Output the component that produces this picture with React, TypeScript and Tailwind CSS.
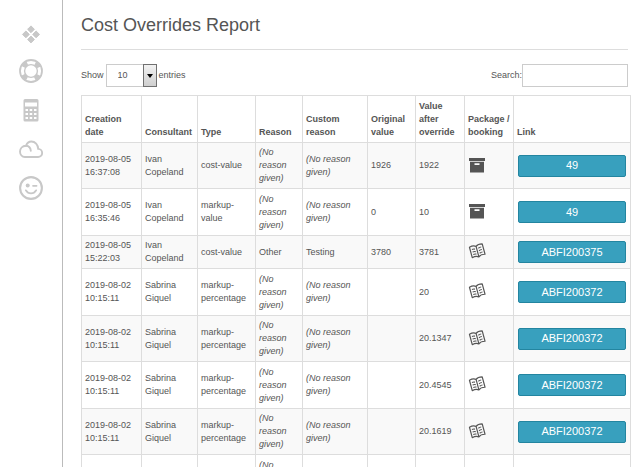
import React from "react";

type Row = {
  date: string;
  time: string;
  consultant: string;
  type: string;
  reason?: string;
  custom?: string;
  original: string;
  value: string;
  kind: "package" | "booking";
  link: string;
};

const sabrina = (value: string): Row => ({
  date: "2019-08-02",
  time: "10:15:11",
  consultant: "Sabrina Giquel",
  type: "markup-percentage",
  original: "",
  value,
  kind: "booking",
  link: "ABFI200372",
});

const rows: Row[] = [
  { date: "2019-08-05", time: "16:37:08", consultant: "Ivan Copeland", type: "cost-value", original: "1926", value: "1922", kind: "package", link: "49" },
  { date: "2019-08-05", time: "16:35:46", consultant: "Ivan Copeland", type: "markup-value", original: "0", value: "10", kind: "package", link: "49" },
  { date: "2019-08-05", time: "15:22:03", consultant: "Ivan Copeland", type: "cost-value", reason: "Other", custom: "Testing", original: "3780", value: "3781", kind: "booking", link: "ABFI200375" },
  sabrina("20"),
  sabrina("20.1347"),
  sabrina("20.4545"),
  sabrina("20.1619"),
  sabrina("20.1619"),
];

const headings = ["Creation date", "Consultant", "Type", "Reason", "Custom reason", "Original value", "Value after override", "Package\u00a0/ booking", "Link"];

function Diamonds() {
  return (
    <svg viewBox="0 0 24 24" className="block size-6" fill="currentColor" stroke="currentColor" strokeWidth="1" strokeLinejoin="round">
      <path d="M12 5.900l3.400 3.400-3.400 3.400-3.400-3.400zM12 16.100l3.400 3.400-3.400 3.400-3.400-3.400zM6.900 11l3.400 3.400-3.400 3.400-3.400-3.400zM17.100 11l3.400 3.400-3.400 3.400-3.400-3.400z" />
    </svg>
  );
}

function LifeRing() {
  return (
    <svg viewBox="0 0 24 24" className="block size-6" fill="none" stroke="currentColor">
      <circle cx="12" cy="12" r="11" strokeWidth="1.8" />
      <circle cx="12" cy="12" r="6.4" strokeWidth="1.4" />
      <circle cx="12" cy="12" r="8.6" strokeWidth="4.4" strokeDasharray="5.4 8.11" strokeDashoffset="-4.055" />
    </svg>
  );
}

function Calculator() {
  return (
    <svg viewBox="0 0 24 24" className="block size-6" fill="currentColor">
      <path fillRule="evenodd" d="M6 1h12a1.5 1.5 0 0 1 1.5 1.5v19.500a1.500 1.500 0 0 1-1.500 1.500H6a1.500 1.500 0 0 1-1.500-1.500V2.500A1.500 1.500 0 0 1 6 1zM6 4.500v4h12v-4zM6.500 11v2h2.500v-2zM10.700 11v2h2.500v-2zM15 11v2h2.500v-2zM6.500 15v2h2.500v-2zM10.700 15v2h2.500v-2zM15 15v2h2.500v-2zM6.500 19v2h2.500v-2zM10.700 19v2h2.500v-2zM15 19v2h2.500v-2z" />
    </svg>
  );
}

function Cloud() {
  return (
    <svg viewBox="0 0 24 24" className="block size-6" fill="none" stroke="currentColor" strokeWidth="1.900" strokeLinecap="round">
      <path d="M5.800 20h13.200a4 4 0 0 0 .2-8.100C19 7.800 16.200 4.500 12.300 4.500 9.700 4.500 7.900 6.200 7 8.700 3.300 8.900 1 11.500 1 14.600c0 3.100 2.200 5.400 4.800 5.400z" />
      <path d="M7 8.700c2.700.2 4.600 2 4.800 5" />
    </svg>
  );
}

function Wink() {
  return (
    <svg viewBox="0 0 24 24" className="block size-6" fill="none" stroke="currentColor" strokeWidth="1.700" strokeLinecap="round">
      <circle cx="12" cy="12" r="10.900" strokeWidth="2.100" />
      <circle cx="8.700" cy="9.500" r="2" fill="currentColor" stroke="none" />
      <path d="M14 9.800h3.600M6.800 14.300c1.300 2.200 3 3.100 5.200 3.100s3.900-.9 5.200-3.100" />
    </svg>
  );
}

function Archive() {
  return (
    <svg viewBox="0 0 16 16" className="block size-4" fill="currentColor">
      <path d="M0 0h16v3H0z" />
      <path fillRule="evenodd" d="M1 3.700h14V14.500H1zM5.500 5.200v1.700h5V5.200z" />
    </svg>
  );
}

function OpenBook() {
  return (
    <svg viewBox="0 0 17 16" className="block h-4 w-[17px] overflow-visible" fill="none" stroke="currentColor" strokeLinejoin="round">
      <g transform="rotate(-15 8 7)">
        <path strokeWidth="1.200" d="M8.300 2.300C6.700 1 4.200.7 1.700 1.400v10.800c2.500-.7 5-.4 6.600 1 1.600-1.400 4.100-1.700 6.600-1V1.400C12.400.7 9.900 1 8.300 2.300zM8.300 2.300v10.900" />
        <path strokeWidth="1.100" d="M3.500 4.200c1.100-.2 2.100 0 3.100.5M3.500 6.800c1.100-.2 2.100 0 3.100.5M3.500 9.400c1.100-.2 2.100 0 3.100.5M13.100 4.200c-1.100-.2-2.100 0-3.100.5M13.100 6.800c-1.100-.2-2.100 0-3.100.5M13.100 9.400c-1.100-.2-2.100 0-3.100.5" />
      </g>
    </svg>
  );
}

const navItems = [
  { label: "Dashboard", Icon: Diamonds },
  { label: "Support", Icon: LifeRing },
  { label: "Calculator", Icon: Calculator },
  { label: "Cloud", Icon: Cloud },
  { label: "Feedback", Icon: Wink },
];

const cell = "border border-[#ddd] py-[3px] pl-[3px]";
const mediaCell = "border border-[#ddd] py-[3px] px-1";

export default function App() {
  return (
    <div className="flex h-screen overflow-hidden bg-white font-['Liberation_Sans',Arial,sans-serif] text-[9px] leading-[13px] text-[#555]">
      <nav className="flex w-[63px] shrink-0 flex-col items-center gap-[15px] border-r border-[#bbb] pt-5 text-[#c8c8c8]">
        {navItems.map(({ label, Icon }) => (
          <a key={label} href="#" aria-label={label}>
            <Icon />
          </a>
        ))}
      </nav>

      <main className="min-w-0 flex-1 pr-[14px] pl-[18px]">
        <h1 className="border-b border-[#ddd] pt-[13px] pb-3 text-lg leading-6">Cost Overrides Report</h1>

        <div className="mt-[14px] flex items-center justify-between">
          <div className="flex items-center gap-[2px]">
            <label htmlFor="length">Show</label>
            <div className="relative">
              <select id="length" defaultValue="10" className="block h-[23px] w-[51px] appearance-none border border-[#ccc] bg-white pl-[11px]">
                <option>10</option>
                <option>25</option>
                <option>50</option>
              </select>
              <span className="pointer-events-none absolute inset-y-0 right-0 flex w-[14px] items-center justify-center border border-[#707070] bg-linear-to-b from-[#f2f2f2] to-[#cfcfcf]">
                <svg viewBox="0 0 6 4" className="h-1 w-1.5" fill="#000">
                  <path d="M0 0h6L3 4z" />
                </svg>
              </span>
            </div>
            <label htmlFor="length">entries</label>
          </div>
          <div className="flex items-center">
            <label htmlFor="search">Search:</label>
            <input id="search" type="text" className="h-[23px] w-[106px] border border-[#ccc] bg-white px-1" />
          </div>
        </div>

        <div className="-mr-[3px] mt-2">
          <table className="w-full table-fixed border-collapse">
            <colgroup>
              <col className="w-[60px]" />
              <col className="w-[56px]" />
              <col className="w-[58px]" />
              <col className="w-[47px]" />
              <col className="w-[65px]" />
              <col className="w-[48px]" />
              <col className="w-[49px]" />
              <col className="w-[49px]" />
              <col />
            </colgroup>
            <thead>
              <tr className="h-[47px]">
                {headings.map((h) => (
                  <th key={h} className={`${cell} text-left align-bottom`}>{h}</th>
                ))}
              </tr>
            </thead>
            <tbody>
              {rows.map((r, i) => (
                <tr key={i} className="odd:bg-[#f9f9f9] even:h-[47px]">
                  <td className={cell}>{r.date} {r.time}</td>
                  <td className={cell}>{r.consultant}</td>
                  <td className={cell}>{r.type}</td>
                  <td className={cell}>{r.reason ?? <i>(No reason given)</i>}</td>
                  <td className={cell}>{r.custom ?? <i>(No reason given)</i>}</td>
                  <td className={cell}>{r.original}</td>
                  <td className={cell}>{r.value}</td>
                  <td className={mediaCell}>{r.kind === "package" ? <Archive /> : <OpenBook />}</td>
                  <td className={mediaCell}>
                    <button type="button" className="block h-[22px] w-full rounded-xs border border-[#2385a0] bg-[#38a0be] text-[11px] text-white">
                      {r.link}
                    </button>
                  </td>
                </tr>
              ))}
            </tbody>
          </table>
        </div>
      </main>
    </div>
  );
}
